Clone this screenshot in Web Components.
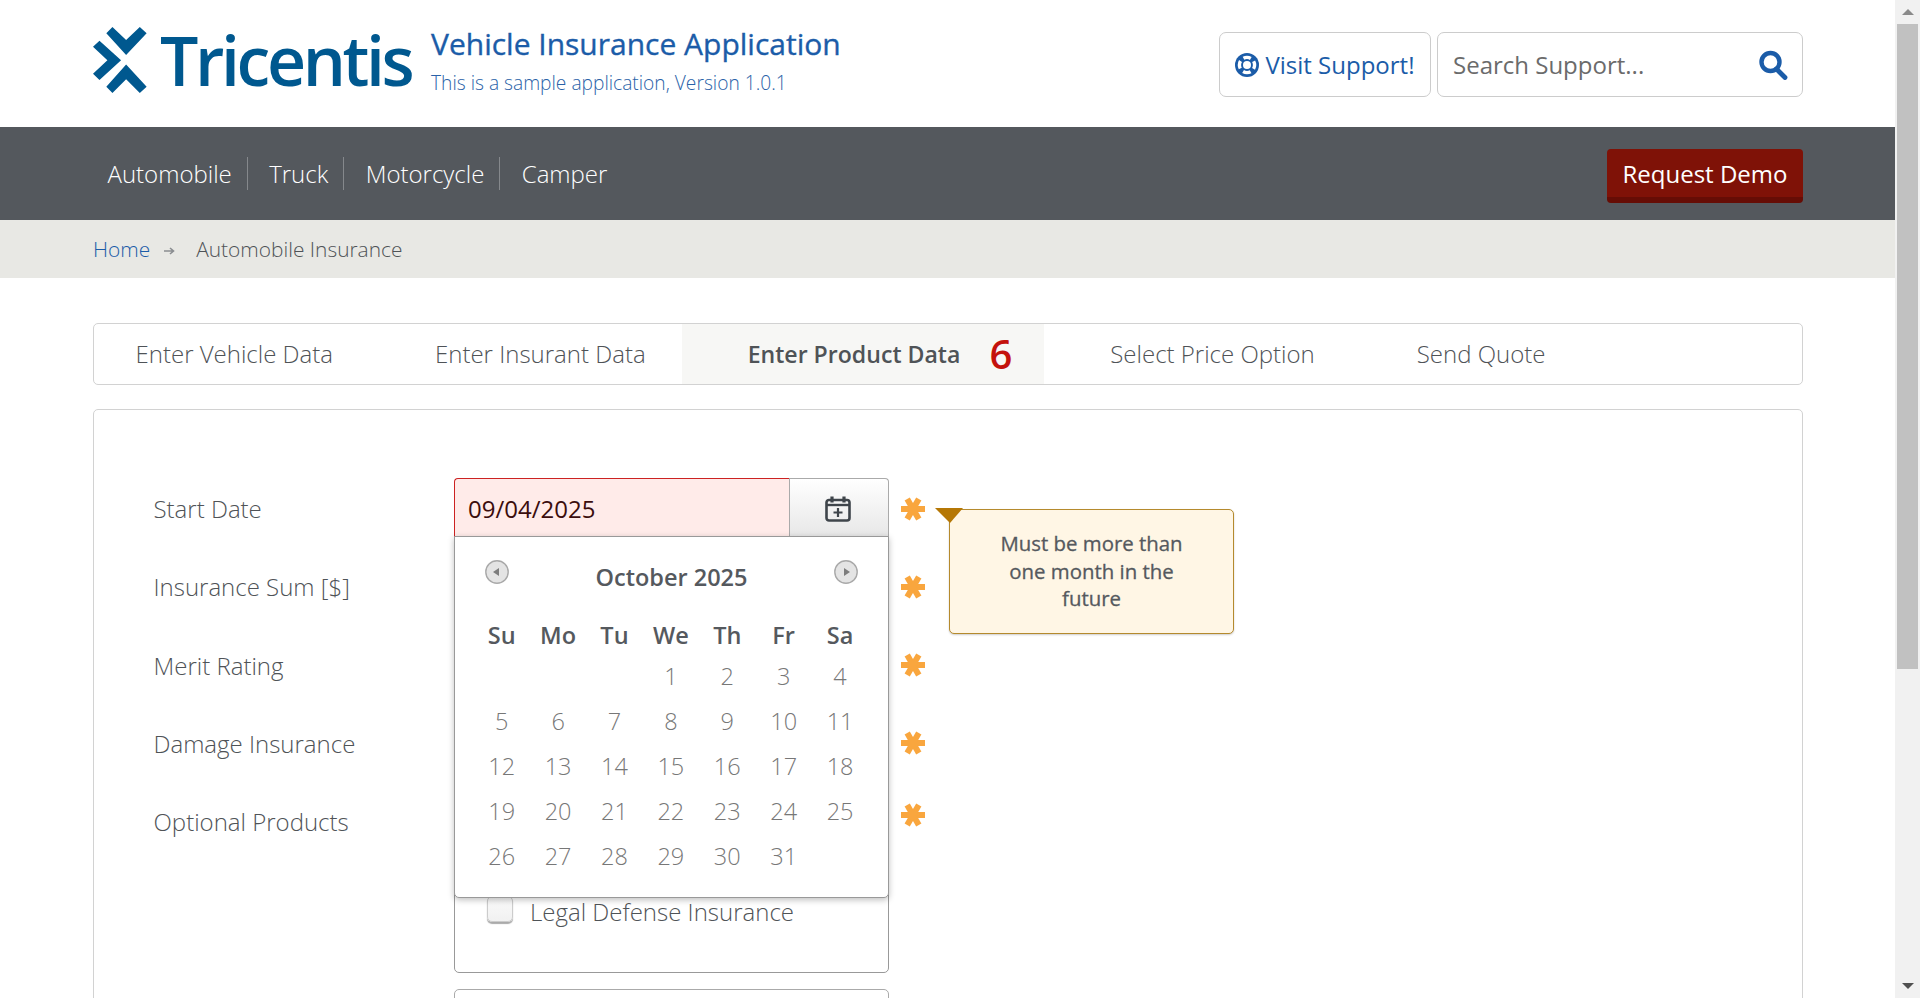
<!DOCTYPE html>
<html lang="en">
<head>
<meta charset="utf-8">
<title>Vehicle Insurance Application</title>
<style>
    html, body { margin: 0; height: 100%; overflow: hidden; background: #fff; }
    body {
        display: flex;
        font-family: "Open Sans", "Liberation Sans", sans-serif;
        color: #55595e;
    }
    #page { flex: 1; min-width: 0; height: 998px; overflow: hidden; }
</style>
</head>
<body>
<div id="page">
    <site-header></site-header>
    <site-nav>
        <nav-link>Automobile</nav-link>
        <nav-link>Truck</nav-link>
        <nav-link>Motorcycle</nav-link>
        <nav-link last>Camper</nav-link>
    </site-nav>
    <bread-crumb></bread-crumb>
    <step-tabs>
        <step-tab style="--pl:41.5px;--pr:50.5px">Enter Vehicle Data</step-tab>
        <step-tab style="--pl:51.5px;--pr:36px">Enter Insurant Data</step-tab>
        <step-tab active count="6" style="--pl:66px;--pr:32px">Enter Product Data</step-tab>
        <step-tab style="--pl:66px;--pr:51px">Select Price Option</step-tab>
        <step-tab style="--pl:51px;--pr:0px">Send Quote</step-tab>
    </step-tabs>
    <form-panel></form-panel>
</div>
<fake-scrollbar></fake-scrollbar>

<script>
class SiteHeader extends HTMLElement {
    constructor() {
        super();
        this.attachShadow({ mode: 'open' }).innerHTML = `
            <style>
                :host { display: flex; align-items: flex-start; height: 127px; padding: 0 92px 0 93px; box-sizing: border-box; background: #fff; }
                .mark { margin: 27px 13px 0 0; flex: none; }
                .word { font: 600 68px/1 "Open Sans", sans-serif; color: #00588f; letter-spacing: -3.4px; margin: 26px 0 0 0; width: 271px; white-space: nowrap; }
                .title { font: 500 30px/36px "Open Sans", sans-serif; -webkit-text-stroke: .35px #1b5ca8; color: #1b5ca8; margin-top: 26px; white-space: nowrap; }
                .sub { font: 300 19.2px/24px "Open Sans", sans-serif; color: #2a62a8; margin-top: 9px; white-space: nowrap; }
                .tools { margin-left: auto; display: flex; gap: 6px; margin-top: 32px; }
                .box { height: 65px; box-sizing: border-box; border: 1px solid #ccc; border-radius: 7px; display: flex; align-items: center; font-size: 24px; }
                .visit { width: 212px; justify-content: center; gap: 6px; color: #1b5ca8; }
                .search { width: 366px; padding: 0 14px 0 15px; justify-content: space-between; color: #6b6b6b; font-weight: 400; }
            </style>
            <svg class="mark" width="54" height="66" viewBox="18 15 150 193" preserveAspectRatio="none">
                <path fill="#00588f" d="M55 33 72 15 110 53 148 15 167 33 110 97Z M18 73 36 55 96 112 36 170 18 152 58 112Z M55 190 110 125 167 190 148 208 110 168 72 208Z"/>
            </svg>
            <div class="word">Tricentis</div>
            <div>
                <div class="title">Vehicle Insurance Application</div>
                <div class="sub">This is a sample application, Version 1.0.1</div>
            </div>
            <div class="tools">
                <div class="box visit">
                    <svg width="24" height="24" viewBox="0 0 24 24">
                        <circle cx="12" cy="12" r="12" fill="#1b5ca8"/>
                        <circle cx="12" cy="12" r="7.6" fill="none" stroke="#fff" stroke-width="3.4" stroke-dasharray="7.9 4.04" stroke-dashoffset="3.95" transform="rotate(-90 12 12)"/>
                        <circle cx="12" cy="12" r="4" fill="#fff"/>
                    </svg>
                    <span>Visit Support!</span>
                </div>
                <div class="box search">
                    <span>Search Support...</span>
                    <svg width="30" height="30" viewBox="0 0 30 30">
                        <circle cx="12.5" cy="12" r="9" fill="none" stroke="#1b5ca8" stroke-width="4.4"/>
                        <path d="M18.5 19 27 27.5" stroke="#1b5ca8" stroke-width="4.8" stroke-linecap="round"/>
                    </svg>
                </div>
            </div>
        `;
    }
}
customElements.define('site-header', SiteHeader);

class SiteNav extends HTMLElement {
    constructor() {
        super();
        this.attachShadow({ mode: 'open' }).innerHTML = `
            <style>
                :host { display: flex; align-items: center; height: 93px; padding: 0 92px 0 107.5px; box-sizing: border-box; background: #54585d; }
                .demo { margin-left: auto; margin-top: 5px; height: 54px; width: 196px; box-sizing: border-box; display: flex; align-items: center; justify-content: center;
                    background: #7f1207; border-bottom: 6px solid #660d05; border-radius: 4px; color: #fff; font-size: 24px; }
            </style>
            <slot></slot>
            <div class="demo">Request Demo</div>
        `;
    }
}
customElements.define('site-nav', SiteNav);

class NavLink extends HTMLElement {
    constructor() {
        super();
        this.attachShadow({ mode: 'open' }).innerHTML = `
            <style>
                :host { display: block; color: #fff; font-weight: 300; font-size: 24px; line-height: 33px; padding-right: 15px; margin-right: 21.4px; border-right: 1px solid #85888c; white-space: nowrap; }
                :host([last]) { border-right: 0; }
            </style>
            <slot></slot>
        `;
    }
}
customElements.define('nav-link', NavLink);

class BreadCrumb extends HTMLElement {
    constructor() {
        super();
        this.attachShadow({ mode: 'open' }).innerHTML = `
            <style>
                :host { display: flex; align-items: center; height: 58px; padding-left: 93px; box-sizing: border-box; background: #e8e8e4; font-size: 20.9px; font-weight: 300; white-space: nowrap; }
                a { color: #1b5ca8; }
                svg { margin: 4px 21px 0 14px; }
                span { color: #4f5357; }
            </style>
            <a>Home</a>
            <svg width="11" height="10" viewBox="0 0 11 10"><path d="M0 5H9M6 2 9.5 5 6 8" fill="none" stroke="#8a8d90" stroke-width="1.6"/></svg>
            <span>Automobile Insurance</span>
        `;
    }
}
customElements.define('bread-crumb', BreadCrumb);

class StepTabs extends HTMLElement {
    constructor() {
        super();
        this.attachShadow({ mode: 'open' }).innerHTML = `
            <style>
                :host { display: flex; height: 62px; margin: 45px 92px 24px 93px; box-sizing: border-box; border: 1px solid #d2d2d2; border-radius: 5px; background: #fff; }
            </style>
            <slot></slot>
        `;
    }
}
customElements.define('step-tabs', StepTabs);

class StepTab extends HTMLElement {
    constructor() {
        super();
        const count = this.getAttribute('count');
        this.attachShadow({ mode: 'open' }).innerHTML = `
            <style>
                :host { display: flex; align-items: center; padding: 0 var(--pr) 2px var(--pl); font-size: 24px; font-weight: 300; color: #4f5357; white-space: nowrap; }
                :host([active]) { background: #f7f7f5; font-weight: 600; font-size: 23.1px; padding-bottom: 0; }
                .n { color: #c4120c; font-weight: 600; font-size: 40px; line-height: 40px; margin: -1px 0 0 29px; }
            </style>
            <slot></slot>${count ? `<span class="n">${count}</span>` : ''}
        `;
    }
}
customElements.define('step-tab', StepTab);

class ReqMark extends HTMLElement {
    constructor() {
        super();
        this.attachShadow({ mode: 'open' }).innerHTML = `
            <style>
                :host { display: block; width: 24px; height: 24px; flex: none; }
                svg { display: block; }
            </style>
            <svg width="24" height="24" viewBox="0 0 24 24">
                <g stroke="#f9a63e" stroke-width="6">
                    <path d="M0 12H24"/>
                    <path d="M6.2 2 17.8 22"/>
                    <path d="M17.8 2 6.2 22"/>
                </g>
            </svg>
        `;
    }
}
customElements.define('req-mark', ReqMark);

class FormRow extends HTMLElement {
    constructor() {
        super();
        const label = this.getAttribute('label') || '';
        const mark = this.hasAttribute('required') ? '<req-mark></req-mark>' : '';
        this.attachShadow({ mode: 'open' }).innerHTML = `
            <style>
                :host { display: flex; align-items: center; height: 59px; margin-bottom: 19.3px; font-size: 24px; font-weight: 300; color: #4f5357; }
                :host([tall]) { align-items: flex-start; height: 182px; margin-bottom: 16px; }
                .lab { width: 301px; flex: none; white-space: nowrap; padding: 2px 0 0 0.5px; box-sizing: border-box; }
                :host([tall]) .lab { padding-top: 14px; }
                .field { width: 435px; flex: none; height: 100%; box-sizing: border-box; position: relative; }
                .mark { margin: 2px 0 0 12px; }
                :host([tall]) .mark { margin-top: 12px; }
            </style>
            <div class="lab">${label}</div>
            <div class="field"><slot></slot></div>
            <div class="mark">${mark}</div>
        `;
    }
}
customElements.define('form-row', FormRow);

class DateField extends HTMLElement {
    constructor() {
        super();
        this.attachShadow({ mode: 'open' }).innerHTML = `
            <style>
                :host { display: flex; height: 59px; box-sizing: border-box; font-size: 24px; font-weight: 400; }
                .val { flex: 1; background: #ffebe9; border: 1px solid #c22; border-width: 1.5px 0 0 1px; border-radius: 4px 0 0 0; padding-left: 13px; display: flex; align-items: center; color: #3b0d0d; }
                .btn { width: 100px; box-sizing: border-box; border: 1px solid #aaa; border-bottom: 0; border-radius: 0 4px 0 0; background: linear-gradient(#fff, #e7e7e7); display: flex; align-items: center; justify-content: center; padding: 2px 2px 0 0; }
            </style>
            <div class="val">09/04/2025</div>
            <div class="btn">
                <svg width="26" height="26" viewBox="0 0 26 26" fill="none" stroke="#3f454b">
                    <rect x="1.5" y="4" width="23" height="20.5" rx="2.5" stroke-width="2.6"/>
                    <path d="M1.5 9H24.5" stroke-width="2.4"/>
                    <path d="M7 .5V6.5M19 .5V6.5" stroke-width="3.2"/>
                    <path d="M8.5 16.5H17.5M13 12V21" stroke-width="2.2"/>
                </svg>
            </div>
        `;
    }
}
customElements.define('date-field', DateField);

class NavBall extends HTMLElement {
    constructor() {
        super();
        const pts = this.hasAttribute('next') ? '10,8 16,12 10,16' : '14,8 8,12 14,16';
        this.attachShadow({ mode: 'open' }).innerHTML = `
            <style>
                :host { display: block; width: 24px; height: 24px; }
                svg { display: block; }
            </style>
            <svg width="24" height="24" viewBox="0 0 24 24">
                <circle cx="12" cy="12" r="11.2" fill="#e4e4e4" stroke="#a9a9a9" stroke-width="1.4"/>
                <polygon points="${pts}" fill="#7d7d7d"/>
            </svg>
        `;
    }
}
customElements.define('nav-ball', NavBall);

class CalPopup extends HTMLElement {
    constructor() {
        super();
        const heads = ['Su', 'Mo', 'Tu', 'We', 'Th', 'Fr', 'Sa'].map(d => `<div class="h">${d}</div>`).join('');
        let days = '<div></div><div></div><div></div>';
        for (let d = 1; d <= 31; d++) days += `<div class="d">${d}</div>`;
        this.attachShadow({ mode: 'open' }).innerHTML = `
            <style>
                :host { display: block; position: absolute; left: 0; top: 58px; width: 435px; height: 362px; box-sizing: border-box; background: #fff; border: 1px solid #999; border-radius: 0 0 5px 5px; box-shadow: 0 2px 6px rgba(0,0,0,.25); z-index: 5; }
                .top { display: flex; align-items: flex-start; justify-content: space-between; padding: 23px 30px 0 30px; height: 62px; box-sizing: border-box; }
                .title { font-size: 23.5px; font-weight: 600; color: #55595e; line-height: 32px; margin-top: 1px; }
                .grid { display: grid; grid-template-columns: repeat(7, 56.4px); grid-template-rows: 40.5px; grid-auto-rows: 45px; margin: 18px 0 0 18.5px; text-align: center; }
                .h { font-size: 23.5px; font-weight: 600; color: #55595e; line-height: 36px; height: 36px; }
                .d { font-size: 23.5px; font-weight: 300; color: #777; line-height: 36px; }
            </style>
            <div class="top">
                <nav-ball></nav-ball>
                <div class="title">October 2025</div>
                <nav-ball next></nav-ball>
            </div>
            <div class="grid">${heads}${days}</div>
        `;
    }
}
customElements.define('cal-popup', CalPopup);

class ToolTip extends HTMLElement {
    constructor() {
        super();
        this.attachShadow({ mode: 'open' }).innerHTML = `
            <style>
                :host { display: block; position: absolute; left: 495px; top: 31px; width: 285px; height: 125px; box-sizing: border-box; padding: 20px 38px 0; background: #fff6e5; border: 1px solid #b58a2d; border-radius: 5px; box-shadow: 0 1px 2px rgba(0,0,0,.2); text-align: center; font-size: 20.4px; line-height: 27.5px; font-weight: 500; -webkit-text-stroke: .3px #55595e; color: #55595e; z-index: 6; }
                svg { position: absolute; left: -15px; top: -2px; }
            </style>
            <svg width="28" height="15" viewBox="0 0 28 15"><polygon points="0,0 28,0 15,15" fill="#b57705"/></svg>
            <slot></slot>
        `;
    }
}
customElements.define('tool-tip', ToolTip);

class CheckOption extends HTMLElement {
    constructor() {
        super();
        this.attachShadow({ mode: 'open' }).innerHTML = `
            <style>
                :host { display: flex; align-items: center; font-size: 24px; font-weight: 300; color: #4f5357; white-space: nowrap; }
                i { width: 26px; height: 26px; box-sizing: border-box; border: 1px solid #ccc; border-radius: 5px; background: linear-gradient(#fafafa, #f1f1f1); box-shadow: 0 2px 1px #aaa; margin: -6px 17px 0 0; }
            </style>
            <i></i><slot></slot>
        `;
    }
}
customElements.define('check-option', CheckOption);

class FormPanel extends HTMLElement {
    constructor() {
        super();
        this.attachShadow({ mode: 'open' }).innerHTML = `
            <style>
                :host { display: block; position: relative; margin: 0 92px 0 93px; padding: 68px 0 0 59px; height: 700px; box-sizing: border-box; border: 1px solid #d2d2d2; border-radius: 5px; background: #fff; }
                .box { height: 100%; box-sizing: border-box; border: 1px solid #999; border-radius: 5px; }
                .opts { padding: 103.3px 0 0 32px; }
                .next { border-color: #aaa; }
                .holder { position: relative; }
            </style>
            <form-row label="Start Date" required>
                <div class="holder">
                    <date-field></date-field>
                    <cal-popup></cal-popup>
                </div>
            </form-row>
            <form-row label="Insurance Sum [$]" required><div class="box"></div></form-row>
            <form-row label="Merit Rating" required><div class="box"></div></form-row>
            <form-row label="Damage Insurance" required><div class="box"></div></form-row>
            <form-row label="Optional Products" required tall>
                <div class="box opts"><check-option>Legal Defense Insurance</check-option></div>
            </form-row>
            <form-row><div class="box next"></div></form-row>
            <tool-tip style="left:855px;top:99px">Must be more than one month in the future</tool-tip>
        `;
    }
}
customElements.define('form-panel', FormPanel);

class FakeScrollbar extends HTMLElement {
    constructor() {
        super();
        this.attachShadow({ mode: 'open' }).innerHTML = `
            <style>
                :host { display: flex; flex-direction: column; align-items: center; width: 25px; height: 998px; flex: none; background: #f1f1f1; }
                .arr { width: 25px; height: 24px; display: flex; align-items: center; justify-content: center; flex: none; }
                .up { width: 0; height: 0; border: 6px solid transparent; border-top: 0; border-bottom: 6px solid #8a8a8a; }
                .dn { width: 0; height: 0; border: 6px solid transparent; border-bottom: 0; border-top: 6px solid #505050; }
                .track { flex: 1; width: 100%; }
                .thumb { width: 21px; height: 645px; margin: 0 auto; background: #c1c1c1; }
            </style>
            <div class="arr"><div class="up"></div></div>
            <div class="track"><div class="thumb"></div></div>
            <div class="arr"><div class="dn"></div></div>
        `;
    }
}
customElements.define('fake-scrollbar', FakeScrollbar);
</script>
</body>
</html>
